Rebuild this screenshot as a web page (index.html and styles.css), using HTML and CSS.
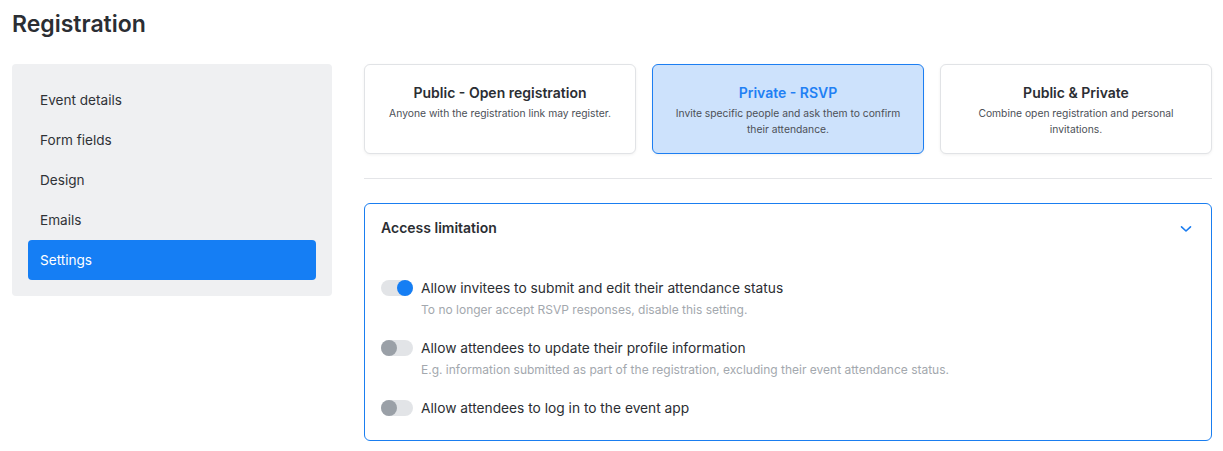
FILE: index.html
```html
<!DOCTYPE html>
<html>
<head>
<meta charset="utf-8">
<link rel="stylesheet" href="styles.css">
</head>
<body>
<div class="page">
  <h1 class="title">Registration</h1>
  <div class="layout">
    <nav class="sidebar">
      <div class="nav-item">Event details</div>
      <div class="nav-item">Form fields</div>
      <div class="nav-item">Design</div>
      <div class="nav-item">Emails</div>
      <div class="nav-item active">Settings</div>
    </nav>
    <main class="main">
      <div class="cards">
        <div class="card">
          <div class="card-title">Public - Open registration</div>
          <div class="card-desc">Anyone with the registration link may register.</div>
        </div>
        <div class="card selected">
          <div class="card-title">Private - RSVP</div>
          <div class="card-desc">Invite specific people and ask them to confirm their attendance.</div>
        </div>
        <div class="card">
          <div class="card-title">Public &amp; Private</div>
          <div class="card-desc">Combine open registration and personal invitations.</div>
        </div>
      </div>
      <hr class="divider">
      <section class="panel">
        <div class="panel-header">
          <span class="panel-title">Access limitation</span>
          <svg class="chevron" width="12" height="8" viewBox="0 0 12 8"><path d="M1.5 1.8 L6 6 L10.5 1.8" fill="none" stroke="#1a7cf0" stroke-width="1.6" stroke-linecap="round" stroke-linejoin="round"/></svg>
        </div>
        <div class="panel-body">
          <div class="option">
            <span class="toggle on"><span class="knob"></span></span>
            <div class="option-text">
              <div class="option-label">Allow invitees to submit and edit their attendance status</div>
              <div class="option-desc">To no longer accept RSVP responses, disable this setting.</div>
            </div>
          </div>
          <div class="option">
            <span class="toggle"><span class="knob"></span></span>
            <div class="option-text">
              <div class="option-label">Allow attendees to update their profile information</div>
              <div class="option-desc">E.g. information submitted as part of the registration, excluding their event attendance status.</div>
            </div>
          </div>
          <div class="option">
            <span class="toggle"><span class="knob"></span></span>
            <div class="option-text">
              <div class="option-label">Allow attendees to log in to the event app</div>
            </div>
          </div>
        </div>
      </section>
    </main>
  </div>
</div>
</body>
</html>
```

FILE: styles.css
```css
* { box-sizing: border-box; }
html, body { margin: 0; padding: 0; background: #ffffff; }
body {
  font-family: Inter, "Noto Sans", sans-serif;
  color: #2b2e33;
  -webkit-font-smoothing: antialiased;
}
.page { padding: 10px 11px 0 12px; }
.title {
  margin: 0;
  font-size: 23px;
  line-height: 28px;
  font-weight: 600;
  color: #2b2e33;
}
.layout {
  display: flex;
  gap: 32px;
  margin-top: 26px;
  align-items: flex-start;
}
.sidebar {
  width: 320px;
  flex: none;
  background: #eff0f2;
  border-radius: 4px;
  padding: 16px;
  display: flex;
  flex-direction: column;
}
.nav-item {
  height: 40px;
  line-height: 40px;
  padding-left: 12px;
  font-size: 13.6px;
  color: #2f3237;
  border-radius: 4px;
}
.nav-item.active {
  background: #157ef4;
  color: #ffffff;
}
.main { flex: 1; min-width: 0; }
.cards {
  display: grid;
  grid-template-columns: repeat(3, 1fr);
  gap: 16px;
}
.card {
  height: 90px;
  border: 1px solid #e1e3e6;
  border-radius: 6px;
  background: #fff;
  box-shadow: 0 1px 3px rgba(0,0,0,0.06);
  padding: 18px 12px 0;
  text-align: center;
}
.card.selected {
  background: #cde2fc;
  border-color: #1c7ef2;
}
.card-title {
  font-size: 14px;
  line-height: 20px;
  font-weight: 600;
  color: #2b2e33;
}
.card.selected .card-title { color: #1f80f4; }
.card-desc {
  margin-top: 2px;
  font-size: 10.3px;
  line-height: 16px;
  color: #4c5057;
}
.divider {
  border: 0;
  border-top: 1px solid #e4e5e8;
  margin: 24px 0 24px;
}
.panel {
  border: 1px solid #1a7ef0;
  border-radius: 6px;
  height: 238px;
}
.panel-header {
  height: 47px;
  display: flex;
  align-items: center;
  justify-content: space-between;
  padding: 0 19px 0 16px;
}
.panel-title {
  font-size: 14px;
  font-weight: 600;
  color: #2b2e33;
}
.chevron { display: block; margin-top: 2px; }
.panel-body {
  padding: 27px 16px 0;
  display: flex;
  flex-direction: column;
  gap: 19px;
}
.option { display: flex; gap: 8px; align-items: flex-start; }
.toggle {
  flex: none;
  position: relative;
  width: 32px;
  height: 16px;
  margin-top: 2px;
  border-radius: 8px;
  background: #e2e4e7;
}
.knob {
  position: absolute;
  left: 0;
  top: 0;
  width: 16px;
  height: 16px;
  border-radius: 50%;
  background: #9aa0a7;
}
.toggle.on .knob { left: 16px; background: #157ef4; }
.option-label {
  font-size: 13.75px;
  line-height: 20px;
  color: #2b2e33;
}
.option-desc {
  margin-top: 3px;
  font-size: 12px;
  line-height: 18px;
  color: #a3a8ae;
}
```
